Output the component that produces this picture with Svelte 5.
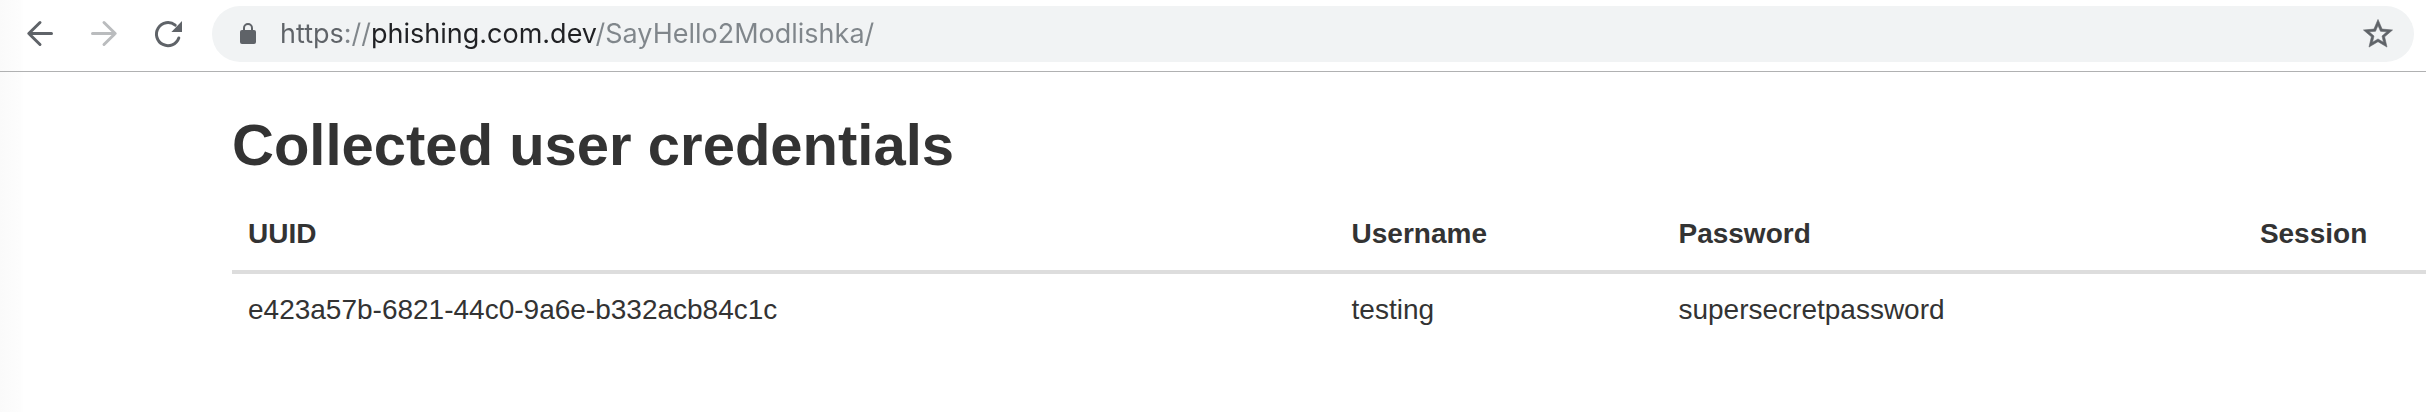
<script>
  let url = $state('https://phishing.com.dev/SayHello2Modlishka/');

  const credentials = [
    {
      uuid: 'e423a57b-6821-44c0-9a6e-b332acb84c1c',
      username: 'testing',
      password: 'supersecretpassword'
    }
  ];
</script>

<div class="window">
  <header class="toolbar">
    <nav class="nav">
      <button type="button" aria-label="Back">
        <svg viewBox="0 0 32 32" fill="none" stroke="currentColor" stroke-width="3" stroke-linecap="round" stroke-linejoin="round">
          <path d="M27.5 15.5H5M16 4.5L4.8 15.5L16 26.5" />
        </svg>
      </button>
      <button type="button" aria-label="Forward" disabled>
        <svg viewBox="0 0 32 32" fill="none" stroke="currentColor" stroke-width="3" stroke-linecap="round" stroke-linejoin="round">
          <path d="M4.5 15.5H27M16 4.5L27.2 15.5L16 26.5" />
        </svg>
      </button>
      <button type="button" aria-label="Reload">
        <svg viewBox="0 0 32 32">
          <path d="M26.8 20A11.5 11.5 0 1 1 23.2 7.2" fill="none" stroke="currentColor" stroke-width="3" stroke-linecap="round" />
          <path d="M30 3V14H19.4Z" fill="currentColor" />
        </svg>
      </button>
    </nav>
    <div class="omnibox">
      <svg class="lock" viewBox="0 0 16 22" aria-hidden="true">
        <path d="M4 8V5a4 4 0 0 1 8 0v3" fill="none" stroke="currentColor" stroke-width="2" />
        <rect y="7" width="16" height="14" rx="2" fill="currentColor" />
      </svg>
      <input type="text" aria-label="Address" spellcheck="false" bind:value={url} />
      <button type="button" class="star" aria-label="Bookmark">
        <svg viewBox="1 1 22 22" fill="currentColor" stroke="currentColor" stroke-width="0.4">
          <path d="M22 9.24l-7.19-.62L12 2 9.19 8.63 2 9.24l5.46 4.73L5.82 21 12 17.27 18.18 21l-1.63-7.03L22 9.24zM12 15.4l-3.76 2.27 1-4.28-3.32-2.88 4.38-.38L12 6.1l1.71 4.04 4.38.38-3.32 2.88 1 4.28L12 15.4z" />
        </svg>
      </button>
    </div>
  </header>

  <main>
    <h2>Collected user credentials</h2>
    <table>
      <thead>
        <tr>
          <th class="uuid" scope="col">UUID</th>
          <th class="username" scope="col">Username</th>
          <th class="password" scope="col">Password</th>
          <th scope="col">Session</th>
        </tr>
      </thead>
      <tbody>
        {#each credentials as row}
          <tr>
            <td>{row.uuid}</td>
            <td>{row.username}</td>
            <td>{row.password}</td>
            <td></td>
          </tr>
        {/each}
      </tbody>
    </table>
  </main>
</div>

<style>
  :global(body) {
    margin: 0;
    background: #fff;
  }

  .window {
    min-height: 100vh;
    background: linear-gradient(to right, #fafafa, #fdfdfd 20px, #fff 24px);
    color: #333;
    font-family: 'Liberation Sans', Arial, sans-serif;
    font-size: 28px;
    line-height: 40px;
  }

  .toolbar {
    display: flex;
    align-items: center;
    gap: 28px;
    padding: 6px 12px 9px 24px;
    border-bottom: 1px solid #b0b1b2;
    color: #5f6368;
  }

  .nav {
    display: flex;
    gap: 32px;
  }

  button {
    display: flex;
    padding: 0;
    border: 0;
    background: none;
    color: inherit;
  }

  button:disabled {
    color: #babcbe;
  }

  button svg {
    width: 32px;
    height: 32px;
  }

  .omnibox {
    display: flex;
    flex: 1;
    align-items: center;
    height: 56px;
    padding: 0 20px 0 28px;
    border-radius: 28px;
    background: #f1f3f4;
  }

  .lock {
    width: 16px;
    height: 22px;
  }

  /* Scheme, separator, host and path each take their own tone. */
  input {
    flex: 1;
    min-width: 0;
    height: 40px;
    margin-left: 24px;
    padding: 0;
    border: 0;
    outline: 0;
    background: linear-gradient(to right, #5f6368 66px, #80868b 66px 91px, #202124 91px 316px, #80868b 316px);
    background-clip: text;
    -webkit-background-clip: text;
    color: transparent;
    caret-color: #202124;
    font: 27px/40px Inter, sans-serif;
  }

  main {
    padding: 40px 0 40px 232px;
  }

  h2 {
    margin: 0 0 20px;
    font-size: 58px;
    line-height: 66px;
  }

  table {
    width: 100%;
    border-spacing: 0;
    table-layout: fixed;
  }

  th,
  td {
    padding: 16px;
    text-align: left;
  }

  th {
    border-bottom: 4px solid #ddd;
  }

  .uuid {
    width: 50.3%;
  }

  .username {
    width: 14.9%;
  }

  .password {
    width: 26.5%;
  }

  th.uuid,
  th.username,
  th.password {
    box-sizing: border-box;
  }
</style>
